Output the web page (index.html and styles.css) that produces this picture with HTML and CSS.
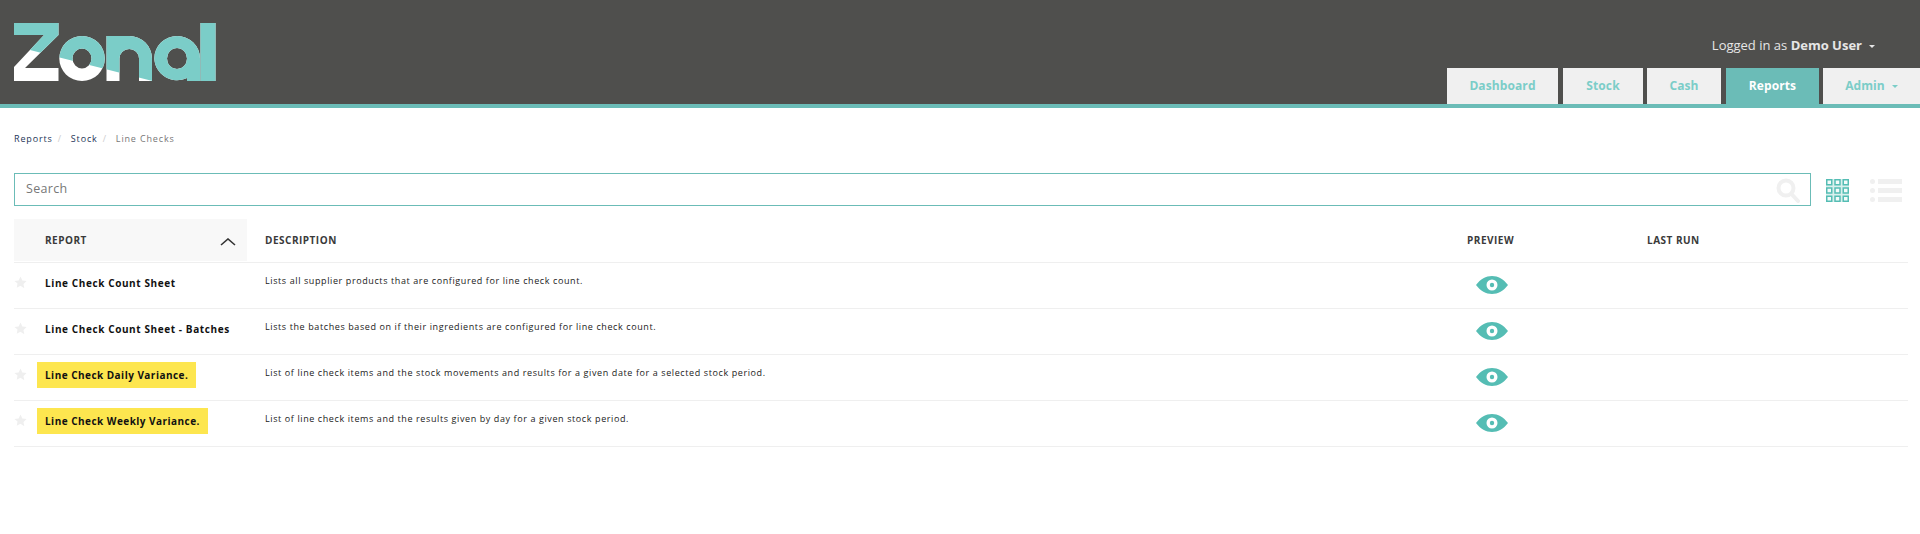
FILE: index.html
```html
<!DOCTYPE html>
<html lang="en">
<head>
<meta charset="utf-8">
<title>Line Checks</title>
<link rel="stylesheet" href="styles.css">
</head>
<body>
<header class="topbar">
  <svg class="logo" width="202" height="58" viewBox="14 23 202 58" role="img" aria-label="Zonal">
    <defs>
      <clipPath id="above"><polygon points="0,0 230,0 230,100 200,93 30,50 0,42.5"/></clipPath>
      <g id="mark">
        <polygon points="14,23 58.5,23 58.5,35 25,68 58.5,68 58.5,81 14,81 14,67 44,35 14,35"/>
        <path fill-rule="evenodd" d="M59.3 58.5a22.75 22.5 0 1 0 45.5 0a22.75 22.5 0 1 0-45.5 0zM72.5 58.5a9.5 10 0 1 1 19 0a9.5 10 0 1 1-19 0z"/>
        <path d="M106.500 81V36H129.250a22.750 22.500 0 0 1 22.750 22.500V81H139V58.500a9.750 9.500 0 0 0-19.500 0V81z"/>
        <path fill-rule="evenodd" d="M154.300 58.500a22.800 22.500 0 0 1 45.700 0V81H187V78a22.800 22.500 0 0 1-32.700-19.500zM167 58.500a10 10.500 0 1 0 20 0a10 10.500 0 1 0-20 0z"/>
        <rect x="200.500" y="23" width="15" height="58"/>
      </g>
    </defs>
    <use href="#mark" class="logo-white"/>
    <use href="#mark" class="logo-teal" clip-path="url(#above)"/>
  </svg>
  <div class="top-right">
    <div class="user">Logged in as <strong>Demo User</strong><span class="caret caret-user"></span></div>
    <nav class="tabs">
      <a class="tab tab-dashboard">Dashboard</a>
      <a class="tab tab-stock">Stock</a>
      <a class="tab tab-cash">Cash</a>
      <a class="tab tab-reports active">Reports</a>
      <a class="tab tab-admin">Admin<span class="caret caret-tab"></span></a>
    </nav>
  </div>
</header>

<main class="content">
  <ol class="crumbs">
    <li><a>Reports</a></li>
    <li><a>Stock</a></li>
    <li class="current">Line Checks</li>
  </ol>

  <div class="toolbar">
    <div class="search">
      <span class="search-text">Search</span>
      <svg class="search-icon" width="24" height="26" viewBox="0 0 24 26">
        <circle cx="10" cy="10" r="7.500" fill="none" stroke="#f0f0f0" stroke-width="4"/>
        <line x1="15.500" y1="16" x2="22" y2="23" stroke="#f0f0f0" stroke-width="4" stroke-linecap="round"/>
      </svg>
    </div>
    <svg class="grid-icon" width="23" height="23" viewBox="0 0 23 23">
      <rect width="23" height="23" fill="#d9f0ed"/>
      <g fill="#f4fbfa" stroke="#55bdb4" stroke-width="1.500">
        <rect x="0.750" y="0.750" width="5" height="5"/><rect x="9" y="0.750" width="5" height="5"/><rect x="17.250" y="0.750" width="5" height="5"/>
        <rect x="0.750" y="9" width="5" height="5"/><rect x="9" y="9" width="5" height="5"/><rect x="17.250" y="9" width="5" height="5"/>
        <rect x="0.750" y="17.250" width="5" height="5"/><rect x="9" y="17.250" width="5" height="5"/><rect x="17.250" y="17.250" width="5" height="5"/>
      </g>
    </svg>
    <svg class="list-icon" width="32" height="23" viewBox="0 0 32 23">
      <g fill="#f0f0f0">
        <circle cx="2.500" cy="2.500" r="2.500"/><rect x="8" y="0" width="24" height="5"/>
        <circle cx="2.500" cy="11.500" r="2.500"/><rect x="8" y="9" width="24" height="5"/>
        <circle cx="2.500" cy="20.500" r="2.500"/><rect x="8" y="18" width="24" height="5"/>
      </g>
    </svg>
  </div>

  <div class="table">
    <div class="row head">
      <div class="col-report sorted"><span>REPORT</span>
        <svg width="16" height="8" viewBox="0 0 16 8"><polyline points="1,7 8,1 15,7" fill="none" stroke="#333" stroke-width="1.600"/></svg>
      </div>
      <div class="col-desc">DESCRIPTION</div>
      <div class="col-preview">PREVIEW</div>
      <div class="col-last">LAST RUN</div>
    </div>

    <div class="row">
      <div class="col-report"><svg class="star" width="13" height="13" viewBox="0 0 24 24"><path d="M12 1l3.400 7.300 7.900 1-5.800 5.500 1.500 7.900L12 18l-7 3.700 1.500-7.900L.7 9.300l7.900-1z"/></svg><span class="name">Line Check Count Sheet</span></div>
      <div class="col-desc desc">Lists all supplier products that are configured for line check count.</div>
      <div class="col-preview"><svg class="eye" width="32" height="18" viewBox="0 0 32 18"><path fill-rule="evenodd" d="M0 9C4.500 3 10 0 16 0s11.500 3 16 9c-4.500 6-10 9-16 9S4.500 15 0 9zM16 3.500a5.500 5.500 0 1 0 0 11a5.500 5.500 0 1 0 0-11z"/><circle cx="16" cy="9" r="2.200"/></svg></div>
      <div class="col-last"></div>
    </div>

    <div class="row">
      <div class="col-report"><svg class="star" width="13" height="13" viewBox="0 0 24 24"><path d="M12 1l3.400 7.300 7.900 1-5.800 5.500 1.500 7.900L12 18l-7 3.700 1.500-7.900L.7 9.300l7.900-1z"/></svg><span class="name">Line Check Count Sheet - Batches</span></div>
      <div class="col-desc desc">Lists the batches based on if their ingredients are configured for line check count.</div>
      <div class="col-preview"><svg class="eye" width="32" height="18" viewBox="0 0 32 18"><path fill-rule="evenodd" d="M0 9C4.500 3 10 0 16 0s11.500 3 16 9c-4.500 6-10 9-16 9S4.500 15 0 9zM16 3.500a5.500 5.500 0 1 0 0 11a5.500 5.500 0 1 0 0-11z"/><circle cx="16" cy="9" r="2.200"/></svg></div>
      <div class="col-last"></div>
    </div>

    <div class="row">
      <div class="col-report"><svg class="star" width="13" height="13" viewBox="0 0 24 24"><path d="M12 1l3.400 7.300 7.900 1-5.800 5.500 1.500 7.900L12 18l-7 3.700 1.500-7.900L.7 9.300l7.900-1z"/></svg><span class="name mark">Line Check Daily Variance.</span></div>
      <div class="col-desc desc">List of line check items and the stock movements and results for a given date for a selected stock period.</div>
      <div class="col-preview"><svg class="eye" width="32" height="18" viewBox="0 0 32 18"><path fill-rule="evenodd" d="M0 9C4.500 3 10 0 16 0s11.500 3 16 9c-4.500 6-10 9-16 9S4.500 15 0 9zM16 3.500a5.500 5.500 0 1 0 0 11a5.500 5.500 0 1 0 0-11z"/><circle cx="16" cy="9" r="2.200"/></svg></div>
      <div class="col-last"></div>
    </div>

    <div class="row">
      <div class="col-report"><svg class="star" width="13" height="13" viewBox="0 0 24 24"><path d="M12 1l3.400 7.300 7.900 1-5.800 5.500 1.500 7.900L12 18l-7 3.700 1.500-7.900L.7 9.300l7.900-1z"/></svg><span class="name mark">Line Check Weekly Variance.</span></div>
      <div class="col-desc desc">List of line check items and the results given by day for a given stock period.</div>
      <div class="col-preview"><svg class="eye" width="32" height="18" viewBox="0 0 32 18"><path fill-rule="evenodd" d="M0 9C4.500 3 10 0 16 0s11.500 3 16 9c-4.500 6-10 9-16 9S4.500 15 0 9zM16 3.500a5.500 5.500 0 1 0 0 11a5.500 5.500 0 1 0 0-11z"/><circle cx="16" cy="9" r="2.200"/></svg></div>
      <div class="col-last"></div>
    </div>
  </div>
</main>
</body>
</html>
```
FILE: styles.css
```css
* { box-sizing: border-box; }

html, body {
  margin: 0;
  padding: 0;
  background: #fff;
  font-family: "Open Sans", "Noto Sans", sans-serif;
  color: #333;
}

/* Header */
.topbar {
  display: flex;
  justify-content: space-between;
  height: 108px;
  background: #4f4f4d;
  border-bottom: 4px solid #6bbcb7;
}

.logo { margin: 23px 0 0 14px; display: block; }
.logo-white { fill: #fff; }
.logo-teal { fill: #7bcdc8; }

.top-right {
  display: flex;
  flex-direction: column;
  align-items: flex-end;
}

.user {
  margin-top: 34px;
  margin-right: 45px;
  height: 22px;
  line-height: 22px;
  font-size: 13px;
  color: #e6e6e6;
  white-space: nowrap;
}
.user strong { font-weight: 700; }

.caret {
  display: inline-block;
  border-top: 3px solid;
  border-left: 3px solid transparent;
  border-right: 3px solid transparent;
  vertical-align: middle;
}
.caret-user { margin-left: 7px; }
.caret-tab { margin-left: 7px; }

.tabs {
  display: flex;
  margin-top: 12px;
  height: 36px;
}

.tab {
  display: block;
  height: 36px;
  line-height: 35px;
  background: #f0f0f0;
  color: #7bcdc8;
  font-size: 12px;
  font-weight: 700;
  letter-spacing: 0.1px;
  text-align: center;
  white-space: nowrap;
}
.tab-dashboard { width: 111px; margin-right: 5px; }
.tab-stock { width: 80px; margin-right: 4px; }
.tab-cash { width: 74px; margin-right: 5px; }
.tab-reports { width: 93px; margin-right: 4px; }
.tab-admin { width: 97px; }
.tab.active { background: #6bbcb7; color: #fff; }

/* Content */
.content { padding: 0 12px 0 14px; }

.crumbs {
  display: flex;
  list-style: none;
  margin: 0;
  padding: 24px 0 0;
  height: 65px;
  font-size: 9px;
  line-height: 14px;
  letter-spacing: 0.85px;
}
.crumbs a { color: #1d3557; }
.crumbs li + li::before {
  content: "/";
  color: #ccc;
  padding: 0 9px 0 5px;
}
.crumbs .current { color: #777; }

.toolbar {
  display: flex;
  align-items: flex-start;
}

.search {
  flex: 1;
  display: flex;
  justify-content: space-between;
  align-items: center;
  height: 33px;
  margin-right: 15px;
  padding: 0 10px 0 11px;
  border: 1px solid #6bbcb7;
}
.search-text {
  font-size: 12.500px;
  letter-spacing: 0.3px;
  color: #777;
  margin-top: -3px;
}
.search-icon { display: block; margin-top: 2px; }

.grid-icon { display: block; margin-top: 6px; margin-right: 21px; }
.list-icon { display: block; margin-top: 6px; margin-right: 6px; }

/* Table */
.table { margin-top: 13px; }

.row {
  display: grid;
  grid-template-columns: 233px 1220px 180px 1fr;
  height: 46px;
  border-bottom: 1px solid #efefef;
}

.row.head {
  height: 44px;
  font-size: 10px;
  font-weight: 700;
  letter-spacing: 0.5px;
  color: #3a3a3a;
  line-height: 42px;
}

.col-report {
  display: flex;
  align-items: center;
  padding-left: 31px;
  position: relative;
}
.col-desc { padding-left: 18px; }

.sorted {
  justify-content: space-between;
  padding-right: 11px;
  background: #f8f8f8;
  margin-bottom: 1px;
}
.sorted svg { display: block; margin-top: 3px; }

.star {
  position: absolute;
  left: 0;
  top: 13px;
  fill: #efefef;
}

.name {
  font-size: 10px;
  font-weight: 700;
  letter-spacing: 0.6px;
  color: #111;
  white-space: nowrap;
  margin-top: -6px;
}
.name.mark {
  background: #fde64f;
  padding: 0 8px;
  margin-left: -8px;
  line-height: 26px;
  margin-top: -6px;
  letter-spacing: 0.47px;
}

.desc {
  font-size: 9px;
  letter-spacing: 0.6px;
  color: #222;
  line-height: 14px;
  padding-top: 11px;
}

.col-preview { display: block; }
.eye {
  display: block;
  margin-top: 13px;
  margin-left: 9px;
  fill: #55bdb4;
}
```
